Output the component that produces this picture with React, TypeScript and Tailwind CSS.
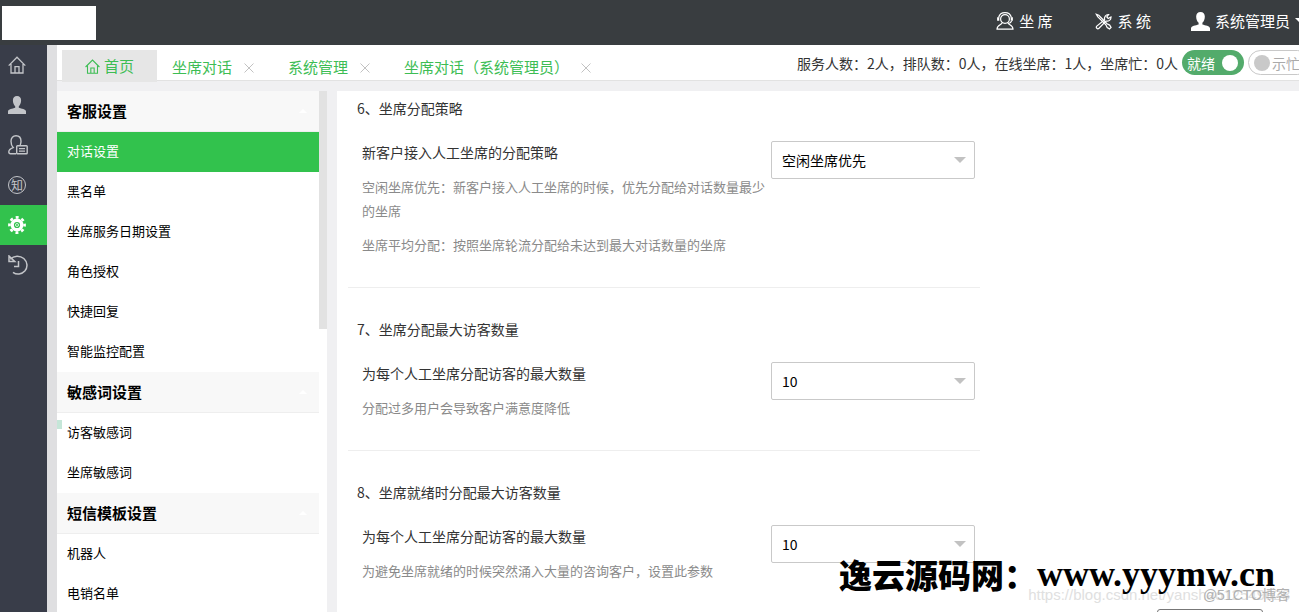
import React, { useState } from "react"
import clsx from "clsx"

type IconProps = { className?: string }

const HomeIcon = ({ className }: IconProps) => (
  <svg viewBox="0 0 18 18" className={className} fill="none" stroke="currentColor" strokeWidth="1.3">
    <path d="M.7 9.6 9 1.2l8.3 8.4M3 8v9h12V8M7 17v-6.3h4V17" />
  </svg>
)

const UserIcon = ({ className }: IconProps) => (
  <svg viewBox="0 0 18 18" className={className} fill="currentColor">
    <path d="M9 0C6.400 0 4.900 1.800 4.900 4.300c0 2.600 1 4.900 2.300 6v1.500C4.500 12.700.2 13.200 0 15.300V18h18v-2.700c-.2-2.100-4.500-2.600-7.200-3.500v-1.500c1.300-1.100 2.300-3.400 2.300-6C13.100 1.800 11.600 0 9 0z" />
  </svg>
)

const UserCardIcon = ({ className }: IconProps) => (
  <svg viewBox="0 0 20 20" className={className} fill="none" stroke="currentColor" strokeWidth="1.400">
    <path d="M8 18.800H2.500C1 18.800.8 17.900.8 16.800c0-2 2-3.300 4.400-4.200C3.600 11 3 8.900 3 6.300 3 3 5 .8 8 .8s5 2.200 5 5.500c0 1.500-.3 2.700-.8 3.700" />
    <rect x="8.700" y="10.800" width="10.500" height="8" rx=".8" />
    <path d="M11 13.600h6M11 16.100h6" />
  </svg>
)

const GearIcon = ({ className }: IconProps) => (
  <svg viewBox="0 0 18 18" className={className} fill="none" stroke="currentColor">
    <circle cx="9" cy="9" r="4.800" strokeWidth="3.400" />
    <circle cx="9" cy="9" r="7.600" strokeWidth="2.600" strokeDasharray="2.980 2.980" strokeDashoffset="1.490" />
    <circle cx="9" cy="9" r="1.500" strokeWidth=".8" />
  </svg>
)

const HistoryIcon = ({ className }: IconProps) => (
  <svg viewBox="0 0 20 20" className={className} fill="none" stroke="currentColor" strokeWidth="1.500">
    <path d="M2.200 4.200C6 .2 12 .3 15.800 3.500c3.800 3.400 4.200 8.800 1 12.600-3 3.400-8.200 4-11.800 1.200" />
    <path d="M1 1v5.600h5.800zM10.500 6v5.500H6" />
  </svg>
)

const AgentIcon = ({ className }: IconProps) => (
  <svg viewBox="0 0 18 18" className={className} fill="none" stroke="currentColor" strokeWidth="1.200">
    <circle cx="9" cy="7" r="4.400" />
    <path d="M2.600 5.500C3.400 2.500 5.800.7 9 .7s5.600 1.800 6.400 4.800" />
    <path d="M2.200 5.200v3.600M15.800 5.200v3.600" strokeWidth="2.200" />
    <path d="M15.600 9c-.6 1.500-1.800 2.400-3.400 2.700M6.200 10.600C5.800 13 1 12.800 1 17.200h16c0-4.400-4.800-4.200-5.200-6.600" />
  </svg>
)

const ToolsIcon = ({ className }: IconProps) => (
  <svg viewBox="0 0 18 18" className={className} fill="none" stroke="currentColor" strokeWidth="1.300">
    <path d="M1.500 1.500 4 2.400l8.700 9 2.800 1.400 1.500 2.500-1.600 1.500-2.500-1.500-1.400-2.800-8.700-8.700z" />
    <path d="M10.200 7.200c-.8-2.700 1.300-5.800 4.200-5.600l-1.900 2.500 1.500 1.700 2.900-1.500c.2 3-2.500 4.900-5.300 4.300L4.200 16.200c-1.600 1.500-3.700-.8-2.300-2.300z" />
  </svg>
)

const CloseIcon = () => (
  <svg viewBox="0 0 10 10" className="size-[10px]" stroke="currentColor" strokeWidth="1">
    <path d="M.5.500l9 9M9.500.500l-9 9" />
  </svg>
)

const rail = [
  { name: "首页", icon: <HomeIcon className="size-[18px]" /> },
  { name: "客户", icon: <UserIcon className="size-[18px]" /> },
  { name: "名片", icon: <UserCardIcon className="size-5" /> },
  {
    name: "知识库",
    icon: (
      <span className="flex size-[18px] items-center justify-center rounded-full border border-current text-xs leading-none">知</span>
    ),
  },
  { name: "设置", icon: <GearIcon className="size-[18px]" /> },
  { name: "历史", icon: <HistoryIcon className="size-5" /> },
]

const tabs = ["坐席对话", "系统管理", "坐席对话（系统管理员）"]

const menu = [
  { title: "客服设置", items: ["对话设置", "黑名单", "坐席服务日期设置", "角色授权", "快捷回复", "智能监控配置"] },
  { title: "敏感词设置", items: ["访客敏感词", "坐席敏感词"] },
  { title: "短信模板设置", items: ["机器人", "电销名单"] },
]

const settings = [
  {
    id: "strategy",
    title: "6、坐席分配策略",
    label: "新客户接入人工坐席的分配策略",
    hints: [
      "空闲坐席优先：新客户接入人工坐席的时候，优先分配给对话数量最少的坐席",
      "坐席平均分配：按照坐席轮流分配给未达到最大对话数量的坐席",
    ],
    options: ["空闲坐席优先", "坐席平均分配"],
  },
  {
    id: "max-visitors",
    title: "7、坐席分配最大访客数量",
    label: "为每个人工坐席分配访客的最大数量",
    hints: ["分配过多用户会导致客户满意度降低"],
    options: ["10", "20"],
  },
  {
    id: "max-ready",
    title: "8、坐席就绪时分配最大访客数量",
    label: "为每个人工坐席分配访客的最大数量",
    hints: ["为避免坐席就绪的时候突然涌入大量的咨询客户，设置此参数"],
    options: ["10", "20"],
  },
]

const Header = () => (
  <header className="flex h-[45px] shrink-0 items-center bg-[#393d40] pb-[3px] text-[15px] text-white">
    <div className="ml-[2px] mt-1 h-[34px] w-[94px] bg-white" />
    <nav className="-mr-2 ml-auto flex items-center">
      <a href="#agent" className="mr-[42px] flex items-center gap-[5px]">
        <AgentIcon className="size-[18px]" />坐 席
      </a>
      <a href="#system" className="mr-10 flex items-center gap-[6px]">
        <ToolsIcon className="size-[17px]" />系 统
      </a>
      <button className="flex items-center gap-[5px]">
        <UserIcon className="size-[19px]" />系统管理员
        <svg viewBox="0 0 12 6" className="h-[6px] w-3" fill="currentColor"><path d="M0 0h12L6 6z" /></svg>
      </button>
    </nav>
  </header>
)

const TabBar = () => {
  const [ready, setReady] = useState(true)
  const [busy, setBusy] = useState(false)

  return (
    <div className="flex h-9 shrink-0 border-b border-[#e2e2e2] bg-white">
      <div className="flex whitespace-nowrap pl-[5px] pt-[5px] text-[15px] text-[#3dbd54]">
        <button className="flex h-8 w-[95px] items-center justify-center gap-1 bg-[#e6e6e6]">
          <HomeIcon className="size-[15px]" />首页
        </button>
        {tabs.map((tab) => (
          <div key={tab} className="flex h-8 items-center pl-[15px] pr-[19px] pt-[3px]">
            <button>{tab}</button>
            <button aria-label="关闭" className="ml-3 text-[#c2c2c2]"><CloseIcon /></button>
          </div>
        ))}
      </div>
      <div className="-mr-[11px] ml-auto flex items-center gap-1 whitespace-nowrap text-sm text-[#333]">
        <span>服务人数：2人，排队数：0人，在线坐席：1人，坐席忙：0人</span>
        <label className="flex h-[25px] w-[62px] items-center justify-between rounded-full bg-[#53ab6b] pl-[5px] pr-[6px] text-white">
          <input type="checkbox" className="sr-only" checked={ready} onChange={() => setReady(!ready)} />
          就绪
          <span className="size-4 rounded-full bg-white" />
        </label>
        <label className="flex h-[25px] w-[62px] items-center gap-[2px] rounded-full border border-[#c9c9c9] pl-[5px] text-[#aaa]">
          <input type="checkbox" className="sr-only" checked={busy} onChange={() => setBusy(!busy)} />
          <span className="size-4 rounded-full bg-[#c9c9c9]" />
          示忙
        </label>
      </div>
    </div>
  )
}

const Sidebar = () => {
  const [current, setCurrent] = useState("对话设置")

  return (
    <aside className="relative flex w-[270px] shrink-0 items-start overflow-hidden bg-white">
      <div className="flex-1">
        {menu.map((group) => (
          <section key={group.title}>
            <h2 className="flex h-[41px] items-center justify-between border-b border-[#eee] bg-[#f8f8f8] pl-[10px] pr-3 text-[15px] font-bold text-black">
              {group.title}
              <svg viewBox="0 0 8 4" className="h-1 w-2" fill="#fff"><path d="M0 4h8L4 0z" /></svg>
            </h2>
            {group.items.map((item) => (
              <button
                key={item}
                onClick={() => setCurrent(item)}
                className={clsx(
                  "flex h-10 w-full items-center pb-[2px] pl-[10px] text-[13px]",
                  item === current ? "bg-[#32c24d] text-white" : "text-black"
                )}
              >
                {item}
              </button>
            ))}
          </section>
        ))}
      </div>
      <div className="h-[238px] w-2 bg-[#e2e2e2]" />
      <div className="absolute left-0 top-[329px] h-[9px] w-[5px] bg-[#c5e6d8]" />
    </aside>
  )
}

const Settings = () => (
  <main className="min-w-0 flex-1 overflow-hidden bg-white pl-[11px] text-sm leading-[22px] text-[#333]">
    {settings.map((s, index) => (
      <section
        key={s.id}
        className={clsx(
          "max-w-[632px] pr-[5px]",
          index === 0 ? "pt-[6px]" : "pt-[30px]",
          index < settings.length - 1 ? "border-b border-[#eee] pb-[30px]" : "pb-[26px]"
        )}
      >
        <h3 className="pl-[9px]">{s.title}</h3>
        <div className="mt-[22px] flex items-start pl-[14px]">
          <div className="flex-1">
            <label htmlFor={s.id} className="block pb-[2px]">{s.label}</label>
            {s.hints.map((hint) => (
              <p key={hint} className="mt-[10px] text-[13px] leading-6 text-[#8a8a8a]">{hint}</p>
            ))}
          </div>
          <div className="relative w-[204px]">
            <select id={s.id} className="block h-[38px] w-full appearance-none rounded-[2px] border border-[#c9c9c9] bg-white px-[10px] text-black">
              {s.options.map((option) => (
                <option key={option}>{option}</option>
              ))}
            </select>
            <svg viewBox="0 0 12 6" className="pointer-events-none absolute right-[9px] top-4 h-[6px] w-3" fill="#c2c2c2"><path d="M0 0h12L6 6z" /></svg>
          </div>
        </div>
      </section>
    ))}
    <div className="flex justify-end pr-9">
      <button aria-label="保存" className="h-[38px] w-[106px] rounded-[3px] border border-[#777]" />
    </div>
  </main>
)

export default function App() {
  return (
    <div className="relative flex h-screen flex-col overflow-hidden bg-[#f0f0f2] font-['Noto_Sans_CJK_SC',sans-serif]">
      <Header />
      <div className="flex min-h-0 flex-1">
        <nav className="w-[47px] shrink-0 bg-[#393d49] text-[#c3c5c9]">
          {rail.map((item) => (
            <button
              key={item.name}
              aria-label={item.name}
              className={clsx(
                "flex h-10 w-full items-center pl-2",
                item.name === "设置" && "bg-[#32c24d] text-white"
              )}
            >
              {item.icon}
            </button>
          ))}
        </nav>
        <div className="w-[10px] shrink-0 bg-[#dfdfe1]" />
        <div className="flex min-w-0 flex-1 flex-col">
          <TabBar />
          <div className="flex min-h-0 flex-1 gap-[10px] pt-[10px]">
            <Sidebar />
            <Settings />
          </div>
        </div>
      </div>
      <div className="pointer-events-none absolute bottom-[5px] right-[9px] whitespace-nowrap font-['Liberation_Sans',sans-serif] text-[15px] leading-6 text-[#e0e0e0]">
        https://blog.csdn.net/yanshao12549028
      </div>
      <div className="pointer-events-none absolute bottom-[5px] right-[9px] whitespace-nowrap font-['Liberation_Sans','Noto_Sans_CJK_SC',sans-serif] text-sm leading-6 text-[#b0b0b0]">
        @51CTO博客
      </div>
      <div className="pointer-events-none absolute bottom-5 right-6 flex items-center whitespace-nowrap font-black leading-none text-black">
        <span className="font-['Noto_Sans_CJK_SC',sans-serif] text-[33px]">逸云源码网：</span>
        <span className="font-['Liberation_Serif',serif] text-[36px]">www.yyymw.cn</span>
      </div>
    </div>
  )
}
